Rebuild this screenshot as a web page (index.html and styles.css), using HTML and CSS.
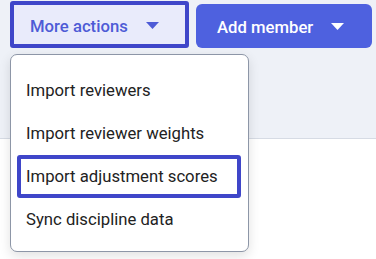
FILE: index.html
```html
<!DOCTYPE html>
<html lang="en">
<head>
    <meta charset="UTF-8">
    <meta name="viewport" content="width=device-width, initial-scale=1.0">
    <title>Members</title>
    <link rel="stylesheet" href="styles.css">
</head>
<body>
    <div class="page">
        <div class="toolbar">
            <button class="btn btn-secondary" type="button">
                More actions
                <svg class="caret" width="13" height="7" viewBox="0 0 13 7"><path d="M0 0h13L6.5 7z" fill="currentColor"/></svg>
            </button>
            <button class="btn btn-primary" type="button">
                Add member
                <svg class="caret" width="13" height="7" viewBox="0 0 13 7"><path d="M0 0h13L6.5 7z" fill="currentColor"/></svg>
            </button>
        </div>
        <div class="content"></div>

        <ul class="menu">
            <li class="menu-item">Import reviewers</li>
            <li class="menu-item">Import reviewer weights</li>
            <li class="menu-item focused">Import adjustment scores</li>
            <li class="menu-item">Sync discipline data</li>
        </ul>
    </div>
</body>
</html>
```

FILE: styles.css
```css
body {
    margin: 0;
    font-family: 'Roboto', 'Liberation Sans', sans-serif;
    color: #222;
    background: #fff;
}

.page {
    position: relative;
    width: 376px;
    height: 259px;
    overflow: hidden;
}

.toolbar {
    display: flex;
    align-items: flex-start;
    gap: 7px;
    height: 139px;
    padding: 1px 0 0 10px;
    box-sizing: border-box;
    background: #eef1f7;
    border-bottom: 1px solid #d6dbe4;
}

.btn {
    display: flex;
    align-items: center;
    box-sizing: border-box;
    font-family: inherit;
    font-size: 16.7px;
    font-weight: 500;
    cursor: pointer;
}

.btn-secondary {
    width: 179px;
    height: 47px;
    padding: 3px 0 0 16px;
    gap: 18px;
    background: #e9ebfb;
    color: #4e5bd6;
    border: 4px solid #3f46c9;
    border-radius: 3px;
}

.btn-primary {
    width: 176px;
    height: 44px;
    margin-top: 3px;
    padding: 2px 0 0 21px;
    gap: 18px;
    background: #4e61df;
    color: #fff;
    border: none;
    border-radius: 6px;
}

.caret {
    display: block;
    margin-top: -2px;
}

.menu {
    position: absolute;
    left: 10px;
    top: 54px;
    width: 239px;
    height: 198px;
    box-sizing: border-box;
    margin: 0;
    padding: 14px 0 10px;
    list-style: none;
    background: #fff;
    border: 1px solid #8d96a7;
    border-radius: 7px;
    box-shadow: 0 4px 12px rgba(0, 0, 0, 0.12);
}

.menu-item {
    height: 43px;
    margin: 0 7px 0 6px;
    padding-left: 9px;
    display: flex;
    align-items: center;
    font-size: 16.7px;
    color: #222;
}

.menu-item.focused {
    outline: 4px solid #3f46c9;
    outline-offset: -4px;
    border-radius: 3px;
}
```
